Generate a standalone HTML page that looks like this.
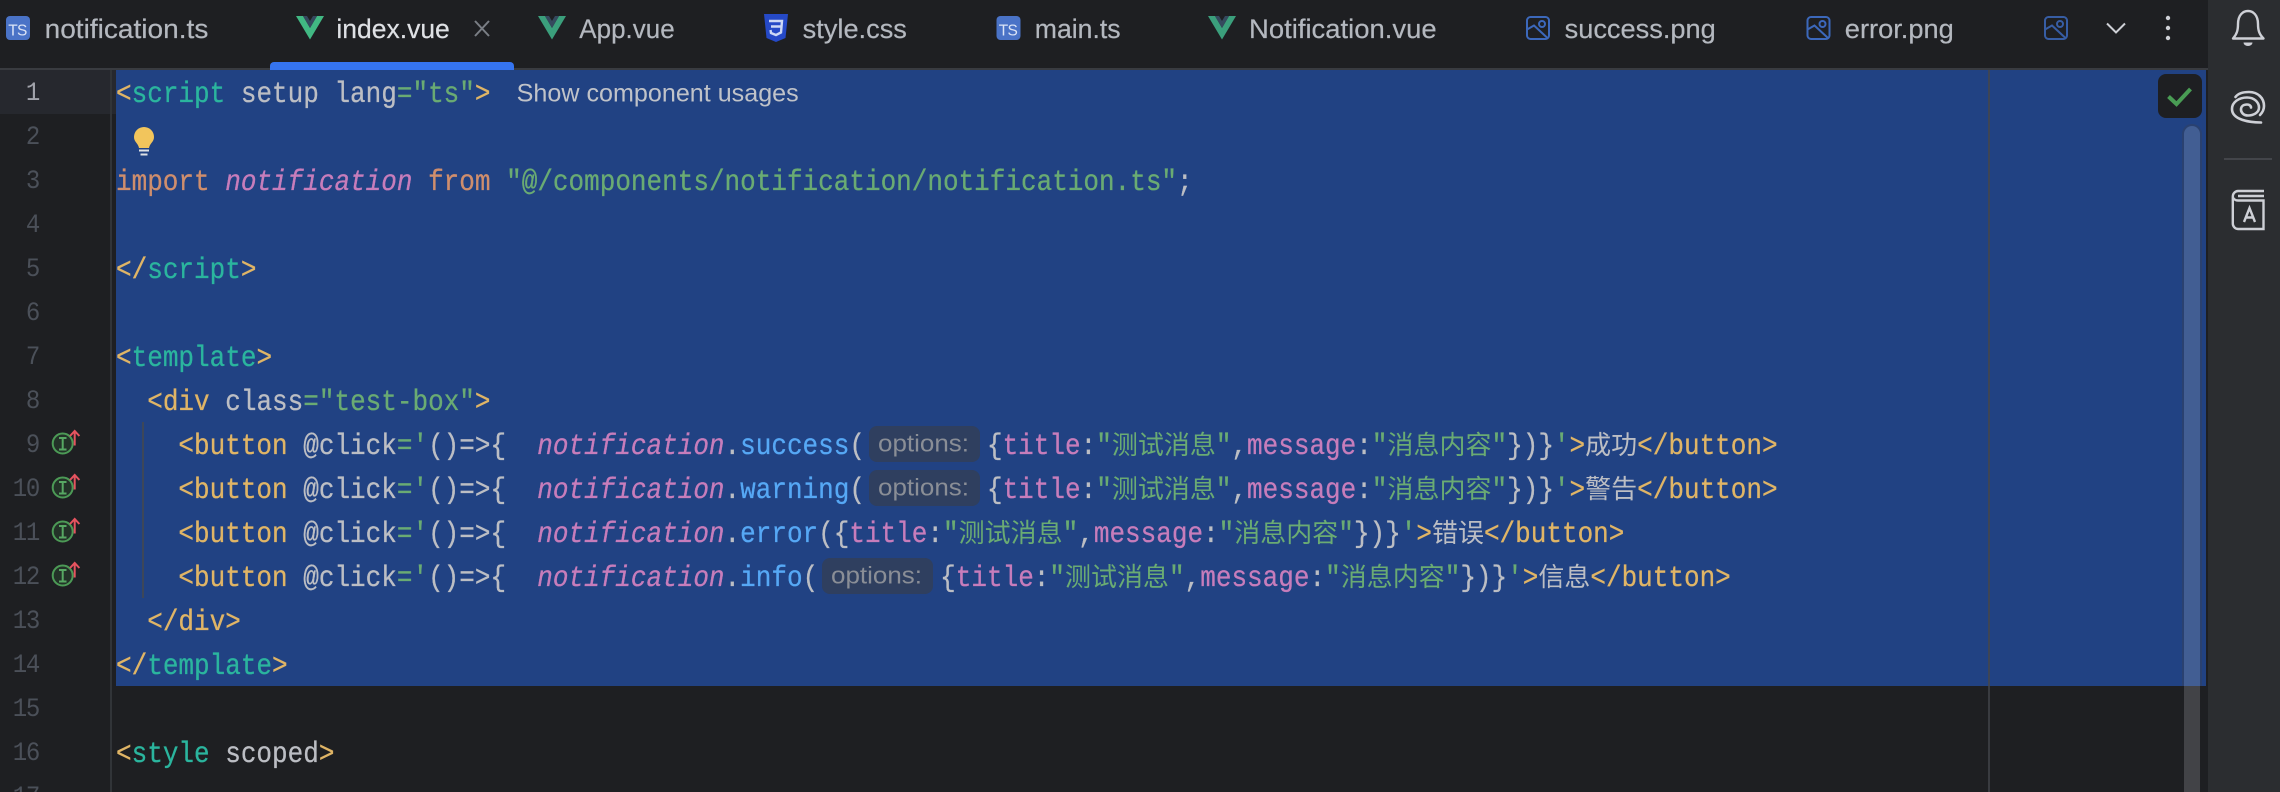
<!DOCTYPE html>
<html lang="en">
<head>
<meta charset="utf-8">
<title>index.vue</title>
<style>
html,body{margin:0;padding:0;width:2280px;height:792px;overflow:hidden;background:#1e1f22}
#root{position:relative;width:2280px;height:792px;overflow:hidden;background:#1e1f22;contain:paint}
.abs{position:absolute}
svg{position:absolute;left:0;top:0}
.l{position:absolute;left:116px;height:44px;line-height:44px;white-space:pre;font-family:"Liberation Mono","Noto Sans CJK SC",monospace;font-size:26px;color:#bcbec4;transform:scaleY(1.13);transform-origin:0 29px;-webkit-text-stroke:.25px currentColor}
.n{position:absolute;left:0;width:39px;height:44px;line-height:44px;text-align:right;font-family:"Liberation Mono",monospace;font-size:24px;letter-spacing:-1.3px;color:#4b5059;transform:scaleY(1.12);transform-origin:0 29px}
.o{color:#e0b566}.t{color:#2bb59e}.g{color:#6aab73}.p{color:#c77dbb}.i{color:#c77dbb;font-style:italic}.b{color:#56a8f5}.k{color:#cf8e6d}
.c{display:inline-block;transform:scaleY(.88);transform-origin:0 29px;-webkit-text-stroke:0}
.s{display:inline-block;width:122px}
.tab{font-family:"Liberation Sans",sans-serif;font-size:27px;fill:#b4b8bf;stroke:#b4b8bf;stroke-width:.2px}
</style>
</head>
<body>
<div id="root">
<div class="abs" style="left:0;top:70px;width:110px;height:44px;background:#26282e"></div>
<div class="abs" style="left:112px;top:70px;width:4px;height:44px;background:#26282e"></div>
<div class="abs" style="left:110px;top:70px;width:2px;height:722px;background:#313438"></div>
<div class="abs" style="left:116px;top:70px;width:2090px;height:616px;background:#214283"></div>
<div class="abs" style="left:0;top:68px;width:2208px;height:2px;background:#393b40"></div>
<div class="abs" style="left:2208px;top:0;width:72px;height:792px;background:#2b2d30"></div>

<svg width="2280" height="792" viewBox="0 0 2280 792" xmlns="http://www.w3.org/2000/svg">
  <defs>
    <g id="ts">
      <rect x="0" y="0" width="24" height="24" rx="4" fill="#4a73c7"/>
    </g>
    <g id="vue">
      <path d="M0 0H7L14 12L21 0H28L14 23.5Z" fill="#3b9f7c"/>
      <path d="M7 0L14 12L21 0H17L14 5L11 0Z" fill="#35495e"/>
    </g>
    <g id="img" fill="none" stroke="#3c68bb" stroke-width="2">
      <rect x="1" y="1" width="22" height="22" rx="3.5"/>
      <circle cx="16" cy="8" r="3"/>
      <path d="M1 13.5L8 9.5L22 22.5"/>
    </g>
    <g id="gi">
      <circle cx="62.7" cy="443.5" r="10" fill="#233228" stroke="#4c9a56" stroke-width="2"/>
      <path d="M59 438H66.5M62.7 438V449.5M59 449.5H66.5" fill="none" stroke="#57a863" stroke-width="2"/>
      <path d="M74.7 445.5V431M70 436L74.7 431L79.4 436" fill="none" stroke="#e5535f" stroke-width="2"/>
    </g>
  </defs>

  <rect x="270" y="62" width="244" height="12" rx="4" fill="#3574f0"/>
  <rect x="116" y="70" width="2090" height="8" fill="#214283"/>
  <rect x="1988" y="70" width="2" height="616" fill="#3d4556"/>
  <rect x="1988" y="686" width="2" height="106" fill="#393b40"/>
  <rect x="142" y="422" width="2" height="176" fill="#3d4759"/>

  <!-- Inlay hints -->
  <rect x="869" y="426" width="111" height="36" rx="8" fill="#2f3f5f"/>
  <rect x="869" y="470" width="111" height="36" rx="8" fill="#2f3f5f"/>
  <rect x="822" y="558" width="111" height="36" rx="8" fill="#2f3f5f"/>
  <g font-family="'Liberation Sans',sans-serif" font-size="24" fill="#8a8e96">
    <text x="878" y="451.5" textLength="91" lengthAdjust="spacingAndGlyphs">options:</text>
    <text x="878" y="495.5" textLength="91" lengthAdjust="spacingAndGlyphs">options:</text>
    <text x="831" y="583.5" textLength="91" lengthAdjust="spacingAndGlyphs">options:</text>
  </g>
  <text x="516.7" y="101.5" textLength="282" lengthAdjust="spacingAndGlyphs" font-family="'Liberation Sans',sans-serif" font-size="25" fill="#c0c3c9">Show component usages</text>

  <!-- Tab icons -->
  <use href="#ts" x="6" y="16"/>
  <text x="8.3" y="35.5" textLength="19" font-family="'Liberation Sans',sans-serif" font-size="15.5" fill="#dbe4f6">TS</text>
  <path d="M296 16H303L310 28L317 16H324L310 39.5Z" fill="#41b883"/>
  <path d="M303 16L310 28L317 16H313L310 21L307 16Z" fill="#35495e"/>
  <use href="#vue" x="538" y="16"/>
  <path d="M764 14H788L785.5 38L776 42L766.5 38Z" fill="#2549c7"/>
  <path d="M769 21H782L781 32.5L776 35L771 33L770.5 30M771 26.5H781.5" fill="none" stroke="#cdd8f5" stroke-width="2.4"/>
  <use href="#ts" x="996.5" y="16"/>
  <text x="998.8" y="35.5" textLength="19" font-family="'Liberation Sans',sans-serif" font-size="15.5" fill="#dbe4f6">TS</text>
  <use href="#vue" x="1208" y="16"/>
  <use href="#img" x="1526" y="16"/>
  <use href="#img" x="1806.5" y="16"/>
  <use href="#img" x="2044" y="16" opacity=".85"/>

  <!-- Tab text -->
  <text class="tab" x="44.6" y="38" textLength="163.8" lengthAdjust="spacingAndGlyphs">notification.ts</text>
  <text class="tab" x="336.4" y="38" textLength="113.4" lengthAdjust="spacingAndGlyphs" style="fill:#dfe1e5;stroke:#dfe1e5">index.vue</text>
  <path d="M475 21L489 36M489 21L475 36" stroke="#7a7e85" stroke-width="2" fill="none"/>
  <text class="tab" x="579.3" y="38" textLength="95.4" lengthAdjust="spacingAndGlyphs">App.vue</text>
  <text class="tab" x="802.7" y="38" textLength="104.2" lengthAdjust="spacingAndGlyphs">style.css</text>
  <text class="tab" x="1034.8" y="38" textLength="85.8" lengthAdjust="spacingAndGlyphs">main.ts</text>
  <text class="tab" x="1249" y="38" textLength="187.7" lengthAdjust="spacingAndGlyphs">Notification.vue</text>
  <text class="tab" x="1564.6" y="38" textLength="151.2" lengthAdjust="spacingAndGlyphs">success.png</text>
  <text class="tab" x="1844.8" y="38" textLength="109" lengthAdjust="spacingAndGlyphs">error.png</text>

  <!-- Chevron and more -->
  <path d="M2107 23.5L2116 32.5L2125 23.5" fill="none" stroke="#ced0d6" stroke-width="2"/>
  <circle cx="2168" cy="18" r="2.2" fill="#ced0d6"/>
  <circle cx="2168" cy="28" r="2.2" fill="#ced0d6"/>
  <circle cx="2168" cy="38" r="2.2" fill="#ced0d6"/>

  <!-- Bulb -->
  <path d="M144 127a10 10 0 0 1 10 10c0 5-4 6-5 11h-10c-1-5-5-6-5-11a10 10 0 0 1 10-10z" fill="#f2c55c"/>
  <rect x="139" y="149.5" width="10" height="2" fill="#dfe1e5"/>
  <rect x="140.5" y="153.5" width="7" height="2" fill="#dfe1e5"/>

  <!-- Gutter icons -->
  <use href="#gi"/>
  <use href="#gi" y="44"/>
  <use href="#gi" y="88"/>
  <use href="#gi" y="132"/>

  <!-- Status and scrollbar -->
  <rect x="2158" y="74" width="44" height="44" rx="8" fill="#1e1f22"/>
  <path d="M2168.5 96.5L2176.5 104L2190.5 89" fill="none" stroke="#499c54" stroke-width="4"/>
  <path d="M2182 686V134a10 10 0 0 1 10-10a10 10 0 0 1 10 10V686Z" fill="#2a4170"/>
  <path d="M2184 686V134a8 8 0 0 1 16 0V686Z" fill="#425e93"/>
  <rect x="2184" y="686" width="16" height="106" fill="#424347"/>

  <!-- Right bar icons -->
  <path d="M2233 38.5C2237 34 2238 30 2238 24C2238 15 2243 11 2248 11C2253 11 2258 15 2258 24C2258 30 2259 34 2263.5 38.5Z" fill="none" stroke="#ced0d6" stroke-width="2.4" stroke-linejoin="round"/>
  <path d="M2243.5 42.5H2252.5A4.5 3.5 0 0 1 2243.5 42.5Z" fill="#ced0d6"/>
  <g fill="none" stroke="#ced0d6" stroke-width="2.6" stroke-linecap="round">
    <path d="M2261 122.5C2250 122.5 2232 120 2232 109C2232 102 2239 97.5 2247 97.5C2254 97.5 2259 102 2259 107.5C2259 113 2253 115.5 2248 115.5C2243 115.5 2241 112 2241 109.5C2241 106 2244 104.5 2247 104.5C2249.5 104.5 2251 106 2251 107.5"/>
    <path d="M2235.5 97C2238 93.5 2243 92 2249 92C2258 92 2264 98 2264 106C2264 110 2262 113 2260 115"/>
  </g>
  <rect x="2224" y="158" width="48" height="2" fill="#43454a"/>
  <g fill="none" stroke="#ced0d6" stroke-width="2.4">
    <path d="M2264 191H2238A5.5 5.5 0 0 0 2232.8 196.5V223.5A5.5 5.5 0 0 0 2238 229H2263.5V200.5H2238A5.2 4 0 0 1 2232.8 196.5"/>
    <path d="M2238 196H2264"/>
    <path d="M2244 222L2249.5 208L2255 222M2246 217.5H2253"/>
  </g>
</svg>

<!-- Line numbers -->
<div class="n" style="top:73px;color:#a1a3ab">1</div>
<div class="n" style="top:117px">2</div>
<div class="n" style="top:161px">3</div>
<div class="n" style="top:205px">4</div>
<div class="n" style="top:249px">5</div>
<div class="n" style="top:293px">6</div>
<div class="n" style="top:337px">7</div>
<div class="n" style="top:381px">8</div>
<div class="n" style="top:425px">9</div>
<div class="n" style="top:469px">10</div>
<div class="n" style="top:513px">11</div>
<div class="n" style="top:557px">12</div>
<div class="n" style="top:601px">13</div>
<div class="n" style="top:645px">14</div>
<div class="n" style="top:689px">15</div>
<div class="n" style="top:733px">16</div>
<div class="n" style="top:777px">17</div>

<!-- Code -->
<div class="l" style="top:73px"><span class="o">&lt;</span><span class="t">script</span> setup lang<span class="g">="ts"</span><span class="o">&gt;</span></div>
<div class="l" style="top:161px"><span class="k">import</span> <span class="i">notification</span> <span class="k">from</span> <span class="g">"@/components/notification/notification.ts"</span>;</div>
<div class="l" style="top:249px"><span class="o">&lt;/</span><span class="t">script</span><span class="o">&gt;</span></div>
<div class="l" style="top:337px"><span class="o">&lt;</span><span class="t">template</span><span class="o">&gt;</span></div>
<div class="l" style="top:381px">  <span class="o">&lt;div</span> class<span class="g">="test-box"</span><span class="o">&gt;</span></div>
<div class="l" style="top:425px">    <span class="o">&lt;button</span> @click<span class="g">='</span>()=&gt;{  <span class="i">notification</span>.<span class="b">success</span>(<span class="s"></span>{<span class="p">title</span>:<span class="g">"<span class="c">测试消息</span>"</span>,<span class="p">message</span>:<span class="g">"<span class="c">消息内容</span>"</span>})}<span class="g">'</span><span class="o">&gt;</span><span class="c">成功</span><span class="o">&lt;/button&gt;</span></div>
<div class="l" style="top:469px">    <span class="o">&lt;button</span> @click<span class="g">='</span>()=&gt;{  <span class="i">notification</span>.<span class="b">warning</span>(<span class="s"></span>{<span class="p">title</span>:<span class="g">"<span class="c">测试消息</span>"</span>,<span class="p">message</span>:<span class="g">"<span class="c">消息内容</span>"</span>})}<span class="g">'</span><span class="o">&gt;</span><span class="c">警告</span><span class="o">&lt;/button&gt;</span></div>
<div class="l" style="top:513px">    <span class="o">&lt;button</span> @click<span class="g">='</span>()=&gt;{  <span class="i">notification</span>.<span class="b">error</span>({<span class="p">title</span>:<span class="g">"<span class="c">测试消息</span>"</span>,<span class="p">message</span>:<span class="g">"<span class="c">消息内容</span>"</span>})}<span class="g">'</span><span class="o">&gt;</span><span class="c">错误</span><span class="o">&lt;/button&gt;</span></div>
<div class="l" style="top:557px">    <span class="o">&lt;button</span> @click<span class="g">='</span>()=&gt;{  <span class="i">notification</span>.<span class="b">info</span>(<span class="s"></span>{<span class="p">title</span>:<span class="g">"<span class="c">测试消息</span>"</span>,<span class="p">message</span>:<span class="g">"<span class="c">消息内容</span>"</span>})}<span class="g">'</span><span class="o">&gt;</span><span class="c">信息</span><span class="o">&lt;/button&gt;</span></div>
<div class="l" style="top:601px">  <span class="o">&lt;/div&gt;</span></div>
<div class="l" style="top:645px"><span class="o">&lt;/</span><span class="t">template</span><span class="o">&gt;</span></div>
<div class="l" style="top:733px"><span class="o">&lt;</span><span class="t">style</span> scoped<span class="o">&gt;</span></div>
</div>
</body>
</html>
